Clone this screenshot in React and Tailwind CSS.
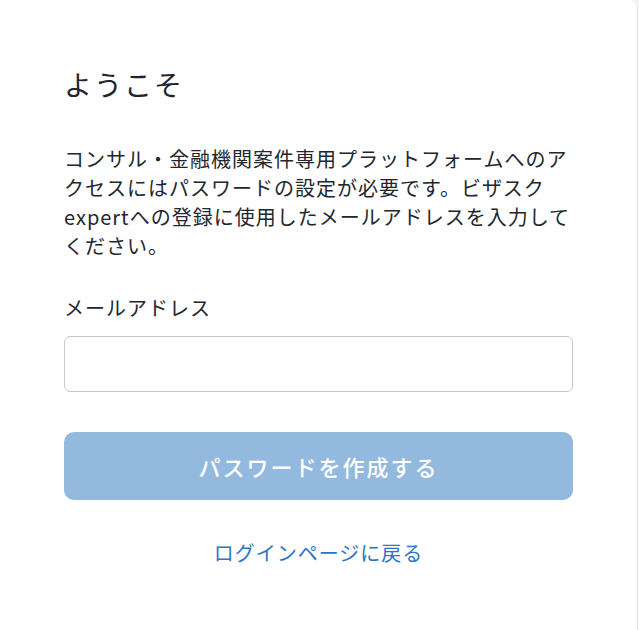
import React, { useState } from 'react';

export default function App() {
  const [email, setEmail] = useState('');

  return (
    <div className="min-h-[630px] w-[639px] bg-[#f4f5f7] font-['Noto_Sans_CJK_JP',sans-serif] text-[#1f2328]">
      <div className="w-[638px] min-h-[630px] bg-white border-r border-[#e4e6ea] rounded-tr-lg px-16 pt-[64px] pb-10">
        <h1 className="text-[28px] leading-[40px] tracking-[2px] font-normal text-[#1e2530]">ようこそ</h1>

        <p className="mt-[40px] text-[20px] leading-[29px] tracking-[1px] text-[#22272e]">
          コンサル・金融機関案件専用プラットフォームへのアクセスにはパスワードの設定が必要です。ビザスクexpertへの登録に使用したメールアドレスを入力してください。
        </p>

        <label className="block mt-[34px] text-[20px] leading-[28px] tracking-[1px] text-[#22272e]">
          メールアドレス
        </label>
        <input
          type="email"
          value={email}
          onChange={(e) => setEmail(e.target.value)}
          className="mt-[14px] block w-full h-[56px] rounded-md border border-[#c5c8cd] px-4 text-[18px] outline-none"
        />

        <button
          disabled={!email}
          className="mt-[40px] w-full h-[68px] rounded-[10px] bg-[#93b9de] text-white text-[22px] tracking-[2px] font-medium"
        >
          パスワードを作成する
        </button>

        <div className="mt-[39px] text-center">
          <a href="#" className="text-[20px] leading-[28px] tracking-[1px] text-[#2d74c8]">
            ログインページに戻る
          </a>
        </div>
      </div>
    </div>
  );
}
